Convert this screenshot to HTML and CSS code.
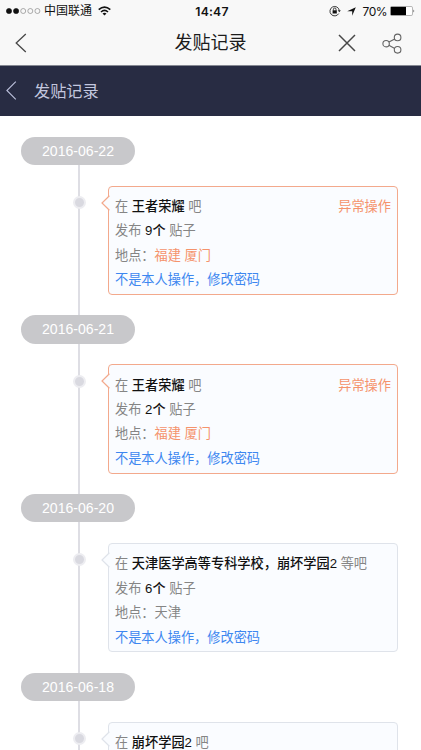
FILE: index.html
```
<!DOCTYPE html>
<html lang="zh-CN">
<head>
<meta charset="utf-8">
<meta name="viewport" content="width=device-width, initial-scale=1">
<title>发贴记录</title>
<link rel="stylesheet" href="styles.css">
</head>
<body>
<div class="app">
  <header class="top">
    <div class="status">
      <div class="carrier">
        <svg width="35" height="8" viewBox="0 0 35 8"><g stroke="#111" stroke-width=".6"><circle cx="3" cy="4" r="2.6" fill="#111"/><circle cx="10.1" cy="4" r="2.6" fill="#111"/><g fill="none" stroke="#777"><circle cx="17.2" cy="4" r="2.5"/><circle cx="24.3" cy="4" r="2.5"/><circle cx="31.4" cy="4" r="2.5"/></g></g></svg>
        <span class="carrier-name">中国联通</span>
        <svg class="wifi" width="13" height="10" viewBox="0 0 13 10"><g fill="none" stroke="#111" stroke-width="1.6"><path d="M.7 3.7Q6.5-1.5 12.3 3.7"/><path d="M3 6Q6.5 2.8 10 6"/></g><path d="M4.5 7.5Q6.5 5.9 8.5 7.5L6.5 9.6z" fill="#111"/></svg>
      </div>
      <div class="clock">14:47</div>
      <div class="battery-group">
        <svg width="12" height="12" viewBox="0 0 12 12"><path d="M9.7 8.6A4.7 4.7 0 1 1 10.3 5.4" fill="none" stroke="#222" stroke-width=".9"/><path d="M8.7 5.2h3.1l-1.5 2z" fill="#222"/><rect x="3.6" y="5.3" width="4.2" height="3.2" fill="#111"/><path d="M4.4 5.5V4.3a1.3 1.3 0 0 1 2.6 0v1.2" fill="none" stroke="#111" stroke-width=".8"/></svg>
        <svg class="location" width="9" height="9" viewBox="0 0 9 9"><path d="M8.8.2L5.2 8.8V4.2H.2z" fill="#111"/></svg>
        <span class="percent">70%</span>
        <svg width="26" height="10" viewBox="0 0 26 10"><rect x=".5" y=".5" width="22" height="9" rx="1.3" fill="#fff" stroke="#888" stroke-width=".6"/><rect x=".8" y=".9" width="15.2" height="8.2" fill="#000"/><path d="M23.5 3.4q1.5 1.6 0 3.2z" fill="#333"/></svg>
      </div>
    </div>
    <div class="nav">
      <svg class="nav-back" width="12" height="20" viewBox="0 0 12 20"><path d="M10.8 1L1.2 10l9.6 9" fill="none" stroke="#484848" stroke-width="1.3"/></svg>
      <h1 class="nav-title">发贴记录</h1>
      <div class="nav-actions">
        <svg width="18" height="18" viewBox="0 0 18 18"><path d="M1 1l16 16M17 1L1 17" stroke="#484848" stroke-width="1.5"/></svg>
        <svg width="20" height="21" viewBox="0 0 20 21"><g fill="none" stroke="#646464" stroke-width="1.1"><circle cx="4.1" cy="10.7" r="3.2"/><circle cx="15.6" cy="4.4" r="3.3"/><circle cx="15.6" cy="16.8" r="3.3"/><path d="M6.9 9.1l5.9-3.2M6.9 12.3l5.8 3.1"/></g></svg>
      </div>
    </div>
  </header>
  <div class="subbar">
    <svg width="11" height="19" viewBox="0 0 11 19"><path d="M9.8.7L.9 9.5l8.9 8.8" fill="none" stroke="#bcc0dc" stroke-width="1.1"/></svg>
    <span class="subbar-title">发贴记录</span>
  </div>
  <main class="timeline">
    <section class="entry">
      <div class="date">2016-06-22</div>
      <i class="dot"></i>
      <article class="card alert">
        <svg class="arrow" width="9" height="16" viewBox="0 0 9 16"><path d="M8.4 .8L1 8l7.4 7.2"/></svg>
        <p class="row"><span>在 <b>王者荣耀</b> 吧</span><span class="warn">异常操作</span></p>
        <p class="row"><span>发布 <b>9个</b> 贴子</span></p>
        <p class="row"><span>地点：<span class="warn">福建 厦门</span></span></p>
        <p class="row"><a class="link">不是本人操作，修改密码</a></p>
      </article>
    </section>
    <section class="entry">
      <div class="date">2016-06-21</div>
      <i class="dot"></i>
      <article class="card alert">
        <svg class="arrow" width="9" height="16" viewBox="0 0 9 16"><path d="M8.4 .8L1 8l7.4 7.2"/></svg>
        <p class="row"><span>在 <b>王者荣耀</b> 吧</span><span class="warn">异常操作</span></p>
        <p class="row"><span>发布 <b>2个</b> 贴子</span></p>
        <p class="row"><span>地点：<span class="warn">福建 厦门</span></span></p>
        <p class="row"><a class="link">不是本人操作，修改密码</a></p>
      </article>
    </section>
    <section class="entry">
      <div class="date">2016-06-20</div>
      <i class="dot"></i>
      <article class="card">
        <svg class="arrow" width="9" height="16" viewBox="0 0 9 16"><path d="M8.4 .8L1 8l7.4 7.2"/></svg>
        <p class="row"><span>在 <b>天津医学高等专科学校，崩坏学园2</b> 等吧</span></p>
        <p class="row"><span>发布 <b>6个</b> 贴子</span></p>
        <p class="row"><span>地点：天津</span></p>
        <p class="row"><a class="link">不是本人操作，修改密码</a></p>
      </article>
    </section>
    <section class="entry">
      <div class="date">2016-06-18</div>
      <i class="dot"></i>
      <article class="card">
        <svg class="arrow" width="9" height="16" viewBox="0 0 9 16"><path d="M8.4 .8L1 8l7.4 7.2"/></svg>
        <p class="row"><span>在 <b>崩坏学园2</b> 吧</span></p>
      </article>
    </section>
  </main>
</div>
</body>
</html>
```
FILE: styles.css
```
* { box-sizing: border-box; }
body {
  margin: 0;
  background: #fff;
  font-family: "Liberation Sans", "Noto Sans CJK SC", sans-serif;
  overflow: hidden;
}
svg { display: block; flex: none; }
.app {
  height: 750px;
  display: flex;
  flex-direction: column;
  overflow: hidden;
}
.top {
  flex: none;
  height: 66px;
  background: #f8f8f8;
  border-bottom: 1px solid #858892;
}
.status {
  height: 21px;
  padding: 0 5px 0 6px;
  display: grid;
  grid-template-columns: 1fr auto 1fr;
  align-items: center;
  color: #111;
  font-size: 12px;
  line-height: 21px;
}
.carrier, .battery-group { display: flex; align-items: center; }
.battery-group { justify-content: flex-end; }
.carrier-name { margin-left: 3px; padding-top: 1px; }
.wifi { margin-left: 6px; }
.clock {
  padding-left: 2px;
  font-family: Inter, sans-serif;
  font-weight: 600;
  font-size: 12.2px;
  letter-spacing: .2px;
}
.location { margin-left: 6px; }
.percent {
  margin: 0 3px 0 7px;
  font-family: Inter, sans-serif;
  font-size: 12px;
  letter-spacing: -.5px;
}
.nav {
  height: 44px;
  padding: 0 19px 0 15px;
  display: grid;
  grid-template-columns: 1fr auto 1fr;
  align-items: center;
}
.nav-title {
  margin: 0;
  padding-left: 4px;
  font-size: 18px;
  font-weight: 400;
  line-height: 44px;
  color: #1c1c1c;
}
.nav-actions {
  display: flex;
  justify-content: flex-end;
  align-items: center;
  gap: 26px;
}
.subbar {
  flex: none;
  height: 50px;
  padding: 0 6px 2px;
  display: flex;
  align-items: center;
  gap: 17px;
  background: #282c43;
  color: #c3c7df;
  font-size: 16.2px;
}
.timeline {
  padding: 20.6px 23px 0 21px;
  background: linear-gradient(#dedee4, #dedee4) 78px 30px / 2px 100% no-repeat;
}
.entry {
  height: 178.7px;
  display: grid;
  grid-template-columns: 87px 1fr;
  grid-template-rows: 49px 109.5px;
}
.date {
  grid-column: 1 / 3;
  width: 114px;
  height: 28.5px;
  border-radius: 15px;
  background: #c8c8cb;
  color: #fff;
  font-size: 14.1px;
  line-height: 28.5px;
  text-align: center;
}
.dot {
  width: 13px;
  height: 13px;
  margin: 10.5px 0 0 51.5px;
  border: 2px solid #ededf1;
  border-radius: 50%;
  background: #d9d9e0;
}
.card {
  --edge: #dfe3ea;
  position: relative;
  padding: 8.4px 6px 0;
  border: 1.3px solid var(--edge);
  border-radius: 4px;
  background: #fafcff;
  color: #858585;
  font-size: 13.2px;
}
.alert { --edge: #f3a98c; }
.arrow {
  position: absolute;
  left: -8px;
  top: 8px;
  fill: #fafcff;
  stroke: var(--edge);
  stroke-width: 1.2;
}
.row {
  display: flex;
  justify-content: space-between;
  margin: 0;
  height: 24.4px;
  line-height: 24.4px;
  white-space: nowrap;
}
.row b { font-weight: 500; color: #111; }
.warn { color: #f5936c; }
.link { color: #3d87f0; }
```
